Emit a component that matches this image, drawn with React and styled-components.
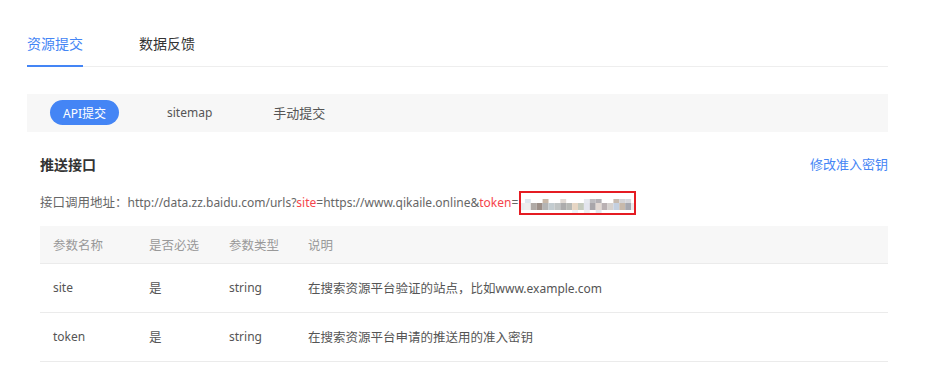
import React from "react";
import styled, { createGlobalStyle } from "styled-components";

const Global = createGlobalStyle`
  html, body { margin: 0; padding: 0; background: #fff; }
  body {
    font-family: "Noto Sans", "Noto Sans CJK SC", sans-serif;
    color: #333;
    -webkit-font-smoothing: antialiased;
  }
`;

const BLUE = "#4485f5";
const RED = "#f5454c";

const Page = styled.div`
  width: 861px;
  padding: 20px 0 0 27px;
`;

const TabBar = styled.div`
  display: flex;
  gap: 56px;
  border-bottom: 1px solid #eeeeee;
`;

const Tab = styled.div`
  font-family: "Noto Sans CJK SC", sans-serif;
  font-size: 14px;
  line-height: 20px;
  padding: 13px 0 12px;
  border-bottom: 2px solid ${(p) => (p.$active ? BLUE : "transparent")};
  color: ${(p) => (p.$active ? BLUE : "#333")};
  margin-bottom: -1px;
`;

const SubBar = styled.div`
  margin-top: 27px;
  height: 38px;
  background: #f7f7f7;
  display: flex;
  align-items: center;
  padding-left: 23px;
  gap: 35px;
`;

const SubItem = styled.div`
  height: 25px;
  padding: 0 13px;
  border-radius: 13px;
  display: flex;
  align-items: center;
  font-size: ${(p) => (p.$cn ? "13px" : "12px")};
  font-family: "Noto Sans", "Noto Sans CJK SC", sans-serif;
  background: ${(p) => (p.$active ? BLUE : "transparent")};
  color: ${(p) => (p.$active ? "#fff" : "#555")};
  margin-top: -1px;
`;

const Content = styled.div`
  padding-left: 13px;
`;

const HeadRow = styled.div`
  margin-top: 22px;
  display: flex;
  justify-content: space-between;
  align-items: center;
  line-height: 20px;
`;

const Heading = styled.div`
  font-family: "Noto Sans CJK SC", sans-serif;
  font-size: 14px;
  font-weight: 700;
  color: #333;
`;

const Link = styled.a`
  font-family: "Noto Sans CJK SC", sans-serif;
  font-size: 13px;
  color: ${BLUE};
  text-decoration: none;
`;

const Address = styled.div`
  margin-top: 17px;
  font-size: 12px;
  line-height: 20px;
  color: #666;
  display: flex;
  align-items: center;
  white-space: nowrap;
`;

const Label = styled.span`
  font-size: 12.5px;
`;

const Red = styled.span`
  color: ${RED};
`;

const TokenBox = styled.span`
  display: inline-block;
  width: 113px;
  height: 20px;
  border: 2px solid #e51c23;
  margin-left: 1px;
  line-height: 0;
`;

const Table = styled.table`
  margin-top: 11px;
  width: 848px;
  border-collapse: collapse;
  table-layout: fixed;
  font-size: 12px;
`;

const Th = styled.th`
  box-sizing: border-box;
  text-align: left;
  font-weight: 400;
  font-size: 12.5px;
  color: #999;
  background: #f7f7f7;
  height: 37px;
  padding: 0 0 0 13px;
  border-bottom: 1px solid #ebebeb;
  width: ${(p) => p.$w || "auto"};
  font-family: "Noto Sans CJK SC", sans-serif;
`;

const Td = styled.td`
  color: #555;
  height: 48px;
  padding: 0 0 0 13px;
  border-bottom: 1px solid #ebebeb;
`;

const Cn = styled.span`
  font-size: 12.5px;
`;

const row1 = { 1: "#dfe6ee", 4: "#c8b8a8", 7: "#e0dad4", 11: "#e6e9ef", 12: "#bdbdc0", 13: "#b3b1b5", 16: "#c7bbb0", 17: "#d3d3d6", 18: "#d6d7dc" };
const row2 = ["#e8ecef", "#eeeeee", "#b0aaa6", "#9c8f88", "#b4b4b4", "#c3ccd0", "#c0c4c4", "#acacac", "#b7b9b5", "#e7d6c4", "#c5cbbf", "#e3e5ee", "#a8a6aa", "#e2d9d3", "#b9b1b3", "#d6d2cf", "#c4d0e0", "#c7b9ab", "#a6a8b0", "#e9eaec"];
const row3 = { 9: "#eef3f8", 11: "#eef0f2", 13: "#e3e9ef" };

function Mosaic() {
  const w = 5.9;
  return (
    <svg width="113" height="20" viewBox="0 0 113 20">
      {Object.entries(row1).map(([i, c]) => (
        <rect key={"a" + i} x={i * w - 2} y="6" width={w} height="4" fill={c} />
      ))}
      {row2.map((c, i) => (
        <rect key={"b" + i} x={i * w - 2} y="10" width={w} height="7" fill={c} />
      ))}
      {Object.entries(row3).map(([i, c]) => (
        <rect key={"c" + i} x={i * w - 2} y="17" width={w} height="3" fill={c} />
      ))}
    </svg>
  );
}

const rows = [
  { name: "site", req: "是", type: "string", pre: "在搜索资源平台验证的站点，比如", post: "www.example.com" },
  { name: "token", req: "是", type: "string", pre: "在搜索资源平台申请的推送用的准入密钥", post: "" },
];

export default function App() {
  return (
    <Page>
      <Global />
      <TabBar>
        <Tab $active>资源提交</Tab>
        <Tab>数据反馈</Tab>
      </TabBar>
      <SubBar>
        <SubItem $active>API提交</SubItem>
        <SubItem>sitemap</SubItem>
        <SubItem $cn>手动提交</SubItem>
      </SubBar>
      <Content>
        <HeadRow>
          <Heading>推送接口</Heading>
          <Link href="#">修改准入密钥</Link>
        </HeadRow>
        <Address>
          <Label>接口调用地址：</Label>http://data.zz.baidu.com/urls?<Red>site</Red>=https://www.qikaile.online&amp;<Red>token</Red>=
          <TokenBox>
            <Mosaic />
          </TokenBox>
        </Address>
        <Table>
          <thead>
            <tr>
              <Th $w="96px">参数名称</Th>
              <Th $w="80px">是否必选</Th>
              <Th $w="79px">参数类型</Th>
              <Th>说明</Th>
            </tr>
          </thead>
          <tbody>
            {rows.map((r) => (
              <tr key={r.name}>
                <Td>{r.name}</Td>
                <Td><Cn>{r.req}</Cn></Td>
                <Td>{r.type}</Td>
                <Td><Cn>{r.pre}</Cn>{r.post}</Td>
              </tr>
            ))}
          </tbody>
        </Table>
      </Content>
    </Page>
  );
}
